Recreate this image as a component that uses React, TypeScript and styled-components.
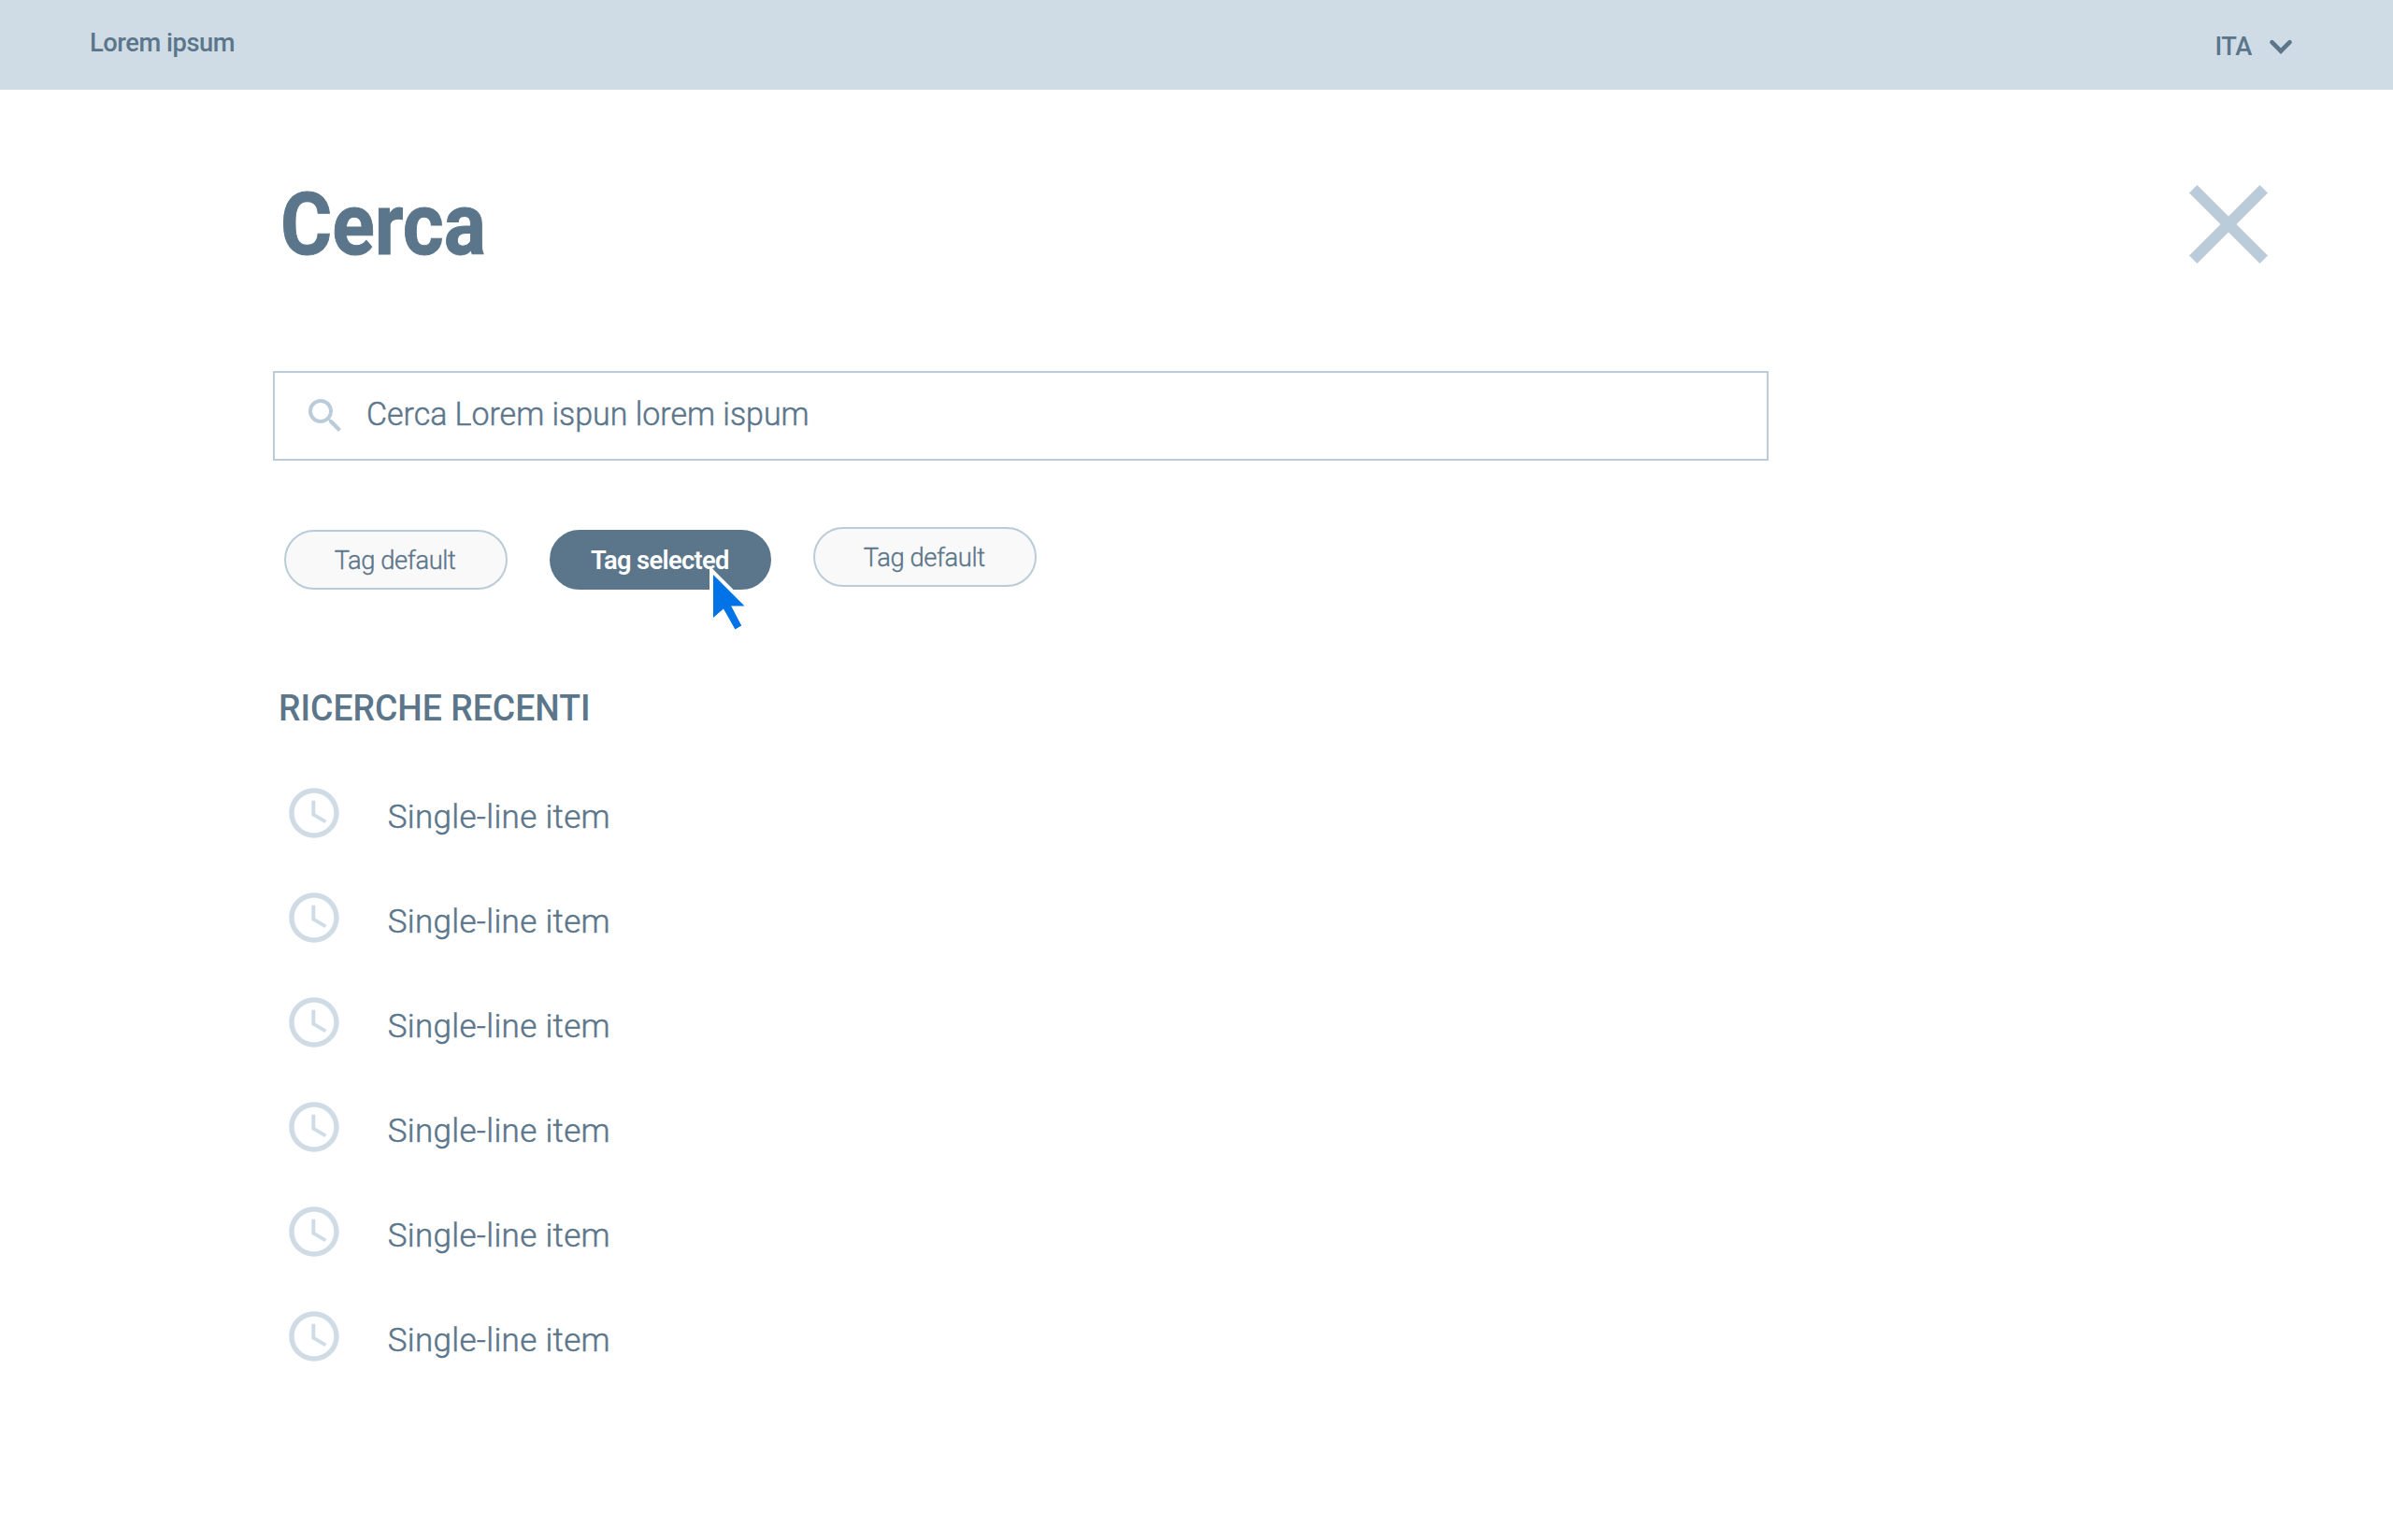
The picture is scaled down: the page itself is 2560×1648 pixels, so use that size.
import React from "react";
import styled, { createGlobalStyle } from "styled-components";

const ink = "#5b768b";
const mist = "#cfdce5";
const line = "#bacbd9";

const GlobalStyle = createGlobalStyle`
  *, *::before, *::after { box-sizing: border-box; }
  body {
    margin: 0;
    background: #ffffff;
    color: ${ink};
    font-family: Roboto, "Open Sans", sans-serif;
    -webkit-font-smoothing: antialiased;
  }
  h1, h2, ul { margin: 0; padding: 0; }
  button { font: inherit; color: inherit; border: 0; background: none; padding: 0; }
  svg { display: block; flex: none; }
`;

const Page = styled.div`
  min-height: 1648px;
`;

const TopBar = styled.header`
  display: flex;
  justify-content: space-between;
  align-items: flex-start;
  height: 96px;
  padding: 26px 104px 0 96px;
  background: ${mist};
  font-size: 27.3px;
  font-weight: 500;
  line-height: 40px;
`;

const SiteName = styled.span`
  letter-spacing: -0.45px;
`;

const Language = styled.button`
  display: flex;
  align-items: center;
  gap: 15px;
  margin-top: 4px;
  letter-spacing: -0.4px;
`;

const Main = styled.main`
  padding: 104px 134px 0 291.5px;
`;

const TitleRow = styled.div`
  display: flex;
  justify-content: space-between;
  align-items: center;
  height: 80px;
`;

const Title = styled.h1`
  margin-left: 8px;
  font-size: 93.4px;
  font-weight: 700;
  line-height: 80px;
  transform: scaleX(0.903);
  transform-origin: left center;
  -webkit-text-stroke: 1px ${ink};
`;

const SearchBox = styled.label`
  display: flex;
  align-items: center;
  gap: 20px;
  width: 1600px;
  height: 96px;
  margin-top: 117px;
  padding-left: 30px;
  border: 2px solid ${line};
`;

const SearchText = styled.span`
  padding-bottom: 2px;
  font-size: 35px;
  font-weight: 300;
  line-height: 44px;
  transform: scaleX(0.969);
  transform-origin: left center;
  -webkit-text-stroke: 0.5px ${ink};
`;

const Tags = styled.div`
  display: flex;
  align-items: flex-start;
  margin: 74px 0 0 12.5px;
`;

const Tag = styled.button<{ $selected?: boolean; $raised?: boolean; $gap?: number }>`
  position: relative;
  display: flex;
  align-items: center;
  justify-content: center;
  width: ${(p) => (p.$selected ? 237 : 239)}px;
  height: 64px;
  padding: 1px 2px 0 0;
  margin-left: ${(p) => p.$gap ?? 0}px;
  margin-top: ${(p) => (p.$raised ? -3 : 0)}px;
  border: 2px solid ${(p) => (p.$selected ? ink : line)};
  border-radius: 32px;
  background: ${(p) => (p.$selected ? ink : "#f9f9f9")};
  color: ${(p) => (p.$selected ? "#ffffff" : ink)};
  font-size: 27.3px;
  font-weight: ${(p) => (p.$selected ? 600 : 300)};
  letter-spacing: ${(p) => (p.$selected ? -0.67 : -0.4)}px;
  -webkit-text-stroke: ${(p) => (p.$selected ? 0 : 0.4)}px ${ink};
`;

const Pointer = styled.svg`
  position: absolute;
  left: 166.3px;
  top: 35px;
  overflow: visible;
`;

const Heading = styled.h2`
  width: max-content;
  margin: 107px 0 0 6px;
  font-size: 39px;
  font-weight: 500;
  line-height: 40px;
  text-transform: uppercase;
  transform: scaleX(0.957);
  transform-origin: left center;
`;

const Recent = styled.ul`
  display: flex;
  flex-direction: column;
  gap: 48px;
  margin: 60px 0 0 12.2px;
  list-style: none;
`;

const RecentItem = styled.li`
  display: flex;
  align-items: center;
  gap: 47px;
  height: 64px;
`;

const RecentText = styled.span`
  padding-top: 9px;
  font-size: 35px;
  font-weight: 300;
  letter-spacing: 0.32px;
  line-height: 48px;
  -webkit-text-stroke: 0.5px ${ink};
`;

const ChevronDown = () => (
  <svg width="32" height="32" viewBox="0 0 32 32" fill="none" stroke={ink} strokeWidth="4.6" strokeLinecap="round">
    <path d="M6.5 11.2 16 20.7l9.5-9.5" />
  </svg>
);

const CloseIcon = () => (
  <svg width="84" height="84" viewBox="0 0 84 84" fill={line}>
    <path d="M84 8.46 75.54 0 42 33.54 8.46 0 0 8.46 33.54 42 0 75.54 8.46 84 42 50.46 75.54 84 84 75.54 50.46 42z" />
  </svg>
);

const SearchIcon = () => (
  <svg width="48" height="48" viewBox="0 0 24 24" fill={line}>
    <path d="M15.5 14h-.79l-.28-.27A6.471 6.471 0 0 0 16 9.5 6.5 6.5 0 1 0 9.5 16c1.61 0 3.09-.59 4.23-1.57l.27.28v.79l5 4.99L20.49 19l-4.99-5zm-6 0C7.01 14 5 11.99 5 9.5S7.01 5 9.5 5 14 7.01 14 9.5 11.99 14 9.5 14z" />
  </svg>
);

const ClockIcon = () => (
  <svg width="64" height="64" viewBox="0 0 24 24" fill={mist}>
    <path d="M11.99 2C6.47 2 2 6.48 2 12s4.47 10 9.99 10C17.52 22 22 17.52 22 12S17.52 2 11.99 2zM12 20c-4.42 0-8-3.58-8-8s3.58-8 8-8 8 3.58 8 8-3.58 8-8 8z" />
    <path d="M12.5 7H11v6l5.25 3.15.75-1.23-4.5-2.67z" />
  </svg>
);

const PointerIcon = () => (
  <Pointer width="48" height="72" viewBox="0 0 48 72">
    <path
      d="M6 11 39.5 44.5H25.2L36.2 65.5 29.4 69.5 17 47.5 6 57z"
      fill="#0073e6"
      stroke="#ffffff"
      strokeWidth="8"
      paintOrder="stroke"
    />
  </Pointer>
);

const recentSearches = Array.from({ length: 6 }, () => "Single-line item");

export default function App() {
  return (
    <Page>
      <GlobalStyle />
      <TopBar>
        <SiteName>Lorem ipsum</SiteName>
        <Language>
          <span>ITA</span>
          <ChevronDown />
        </Language>
      </TopBar>
      <Main>
        <TitleRow>
          <Title>Cerca</Title>
          <button aria-label="Chiudi">
            <CloseIcon />
          </button>
        </TitleRow>
        <SearchBox>
          <SearchIcon />
          <SearchText>Cerca Lorem ispun lorem ispum</SearchText>
        </SearchBox>
        <Tags>
          <Tag>Tag default</Tag>
          <Tag $selected $gap={45.3}>
            Tag selected
            <PointerIcon />
          </Tag>
          <Tag $raised $gap={44.9}>Tag default</Tag>
        </Tags>
        <Heading>Ricerche recenti</Heading>
        <Recent>
          {recentSearches.map((text, i) => (
            <RecentItem key={i}>
              <ClockIcon />
              <RecentText>{text}</RecentText>
            </RecentItem>
          ))}
        </Recent>
      </Main>
    </Page>
  );
}
